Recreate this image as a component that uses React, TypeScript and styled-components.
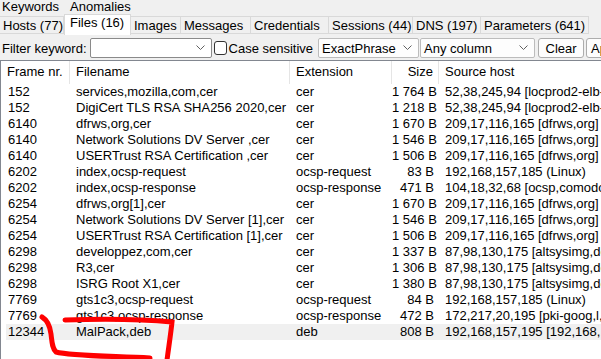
import React from 'react';
import styled, { createGlobalStyle } from 'styled-components';

const GlobalStyle = createGlobalStyle`
  html, body {
    margin: 0;
    padding: 0;
    background: #f0f0f0;
    overflow: hidden;
  }
  body {
    font-family: "Liberation Sans", Arial, sans-serif;
    font-size: 13px;
    color: #000;
  }
`;

interface FileRow {
  frame: string;
  name: string;
  ext: string;
  size: string;
  host: string;
}

const rows: FileRow[] = [
  { frame: '152', name: 'services,mozilla,com,cer', ext: 'cer', size: '1 764 B', host: '52,38,245,94 [locprod2-elb-us-west-2.prod.mozaws.net]' },
  { frame: '152', name: 'DigiCert TLS RSA SHA256 2020,cer', ext: 'cer', size: '1 218 B', host: '52,38,245,94 [locprod2-elb-us-west-2.prod.mozaws.net]' },
  { frame: '6140', name: 'dfrws,org,cer', ext: 'cer', size: '1 670 B', host: '209,17,116,165 [dfrws,org] (Linux)' },
  { frame: '6140', name: 'Network Solutions DV Server ,cer', ext: 'cer', size: '1 546 B', host: '209,17,116,165 [dfrws,org] (Linux)' },
  { frame: '6140', name: 'USERTrust RSA Certification ,cer', ext: 'cer', size: '1 506 B', host: '209,17,116,165 [dfrws,org] (Linux)' },
  { frame: '6202', name: 'index,ocsp-request', ext: 'ocsp-request', size: '83 B', host: '192,168,157,185 (Linux)' },
  { frame: '6202', name: 'index,ocsp-response', ext: 'ocsp-response', size: '471 B', host: '104,18,32,68 [ocsp,comodoca,com]' },
  { frame: '6254', name: 'dfrws,org[1],cer', ext: 'cer', size: '1 670 B', host: '209,17,116,165 [dfrws,org] (Linux)' },
  { frame: '6254', name: 'Network Solutions DV Server [1],cer', ext: 'cer', size: '1 546 B', host: '209,17,116,165 [dfrws,org] (Linux)' },
  { frame: '6254', name: 'USERTrust RSA Certification [1],cer', ext: 'cer', size: '1 506 B', host: '209,17,116,165 [dfrws,org] (Linux)' },
  { frame: '6298', name: 'developpez,com,cer', ext: 'cer', size: '1 337 B', host: '87,98,130,175 [altsysimg,developpez,com]' },
  { frame: '6298', name: 'R3,cer', ext: 'cer', size: '1 306 B', host: '87,98,130,175 [altsysimg,developpez,com]' },
  { frame: '6298', name: 'ISRG Root X1,cer', ext: 'cer', size: '1 380 B', host: '87,98,130,175 [altsysimg,developpez,com]' },
  { frame: '7769', name: 'gts1c3,ocsp-request', ext: 'ocsp-request', size: '84 B', host: '192,168,157,185 (Linux)' },
  { frame: '7769', name: 'gts1c3,ocsp-response', ext: 'ocsp-response', size: '472 B', host: '172,217,20,195 [pki-goog,l,google,com]' },
  { frame: '12344', name: 'MalPack,deb', ext: 'deb', size: '808 B', host: '192,168,157,195 [192,168,157,195] (Linux)' },
];

const upperTabs = ['Keywords', 'Anomalies'];
const lowerTabs: { label: string; width: number }[] = [
  { label: 'Hosts (77)', width: 64 },
  { label: 'Files (16)', width: 67 },
  { label: 'Images', width: 50 },
  { label: 'Messages', width: 70 },
  { label: 'Credentials', width: 78 },
  { label: 'Sessions (44)', width: 84 },
  { label: 'DNS (197)', width: 68 },
  { label: 'Parameters (641)', width: 108 },
];

const Page = styled.div`
  position: relative;
  width: 601px;
  height: 359px;
  overflow: hidden;
  display: flex;
  flex-direction: column;
`;

const TabStrip = styled.div<{ $height: number }>`
  flex: none;
  display: flex;
  align-items: flex-end;
  height: ${(p) => p.$height}px;
  white-space: nowrap;
`;

const UpperTab = styled.div`
  height: 14px;
  line-height: 13px;
  padding: 0 6px 0 2px;
  margin-right: 3px;
`;

const Tab = styled.div<{ $active?: boolean; $width: number }>`
  flex: none;
  width: ${(p) => p.$width}px;
  height: ${(p) => (p.$active ? 21 : 18)}px;
  line-height: ${(p) => (p.$active ? 16 : 18)}px;
  padding-left: ${(p) => (p.$active ? 5 : 3)}px;
  box-sizing: border-box;
  background: ${(p) => (p.$active ? '#ffffff' : '#f0f0f0')};
  border: 1px solid #d9d9d9;
  border-bottom: ${(p) => (p.$active ? 'none' : '1px solid #d9d9d9')};
  border-left: ${(p) => (p.$active ? '1px solid #d9d9d9' : 'none')};
  margin-bottom: ${(p) => (p.$active ? -1 : 0)}px;
  position: relative;
  z-index: ${(p) => (p.$active ? 1 : 0)};
`;

const FilterBar = styled.div`
  flex: none;
  display: flex;
  align-items: center;
  height: 26px;
  padding: 2px 0 0 2px;
  white-space: nowrap;
  box-sizing: border-box;
`;

const Label = styled.span`
  margin-right: 3px;
`;

const Combo = styled.div<{ $width: number; $white?: boolean }>`
  flex: none;
  width: ${(p) => p.$width}px;
  height: 20px;
  box-sizing: border-box;
  border: 1px solid ${(p) => (p.$white ? '#8a8a8a' : '#bcbcbc')};
  border-radius: 2px;
  background: ${(p) => (p.$white ? '#ffffff' : '#fdfdfd')};
  display: flex;
  align-items: center;
  justify-content: space-between;
  padding: 0 6px 0 3px;
  margin-right: 1px;
`;

const Chevron = () => (
  <svg width="9" height="6" viewBox="0 0 9 6">
    <path d="M0.5 0.5 L4.5 4.5 L8.5 0.5" fill="none" stroke="#606060" strokeWidth="1" />
  </svg>
);

const CheckBox = styled.span`
  flex: none;
  width: 11px;
  height: 12px;
  border: 1px solid #333;
  border-radius: 3px;
  background: #fff;
  margin: 0 2px 0 1px;
`;

const CheckLabel = styled.span`
  margin-right: 5px;
`;

const Button = styled.div<{ $width: number }>`
  flex: none;
  width: ${(p) => p.$width}px;
  height: 20px;
  box-sizing: border-box;
  border: 1px solid #adadad;
  border-radius: 3px;
  background: #fdfdfd;
  display: flex;
  align-items: center;
  justify-content: center;
  margin-left: 2px;
`;

const LeftButton = styled(Button)`
  justify-content: flex-start;
  padding-left: 4px;
`;

const Grid = styled.div`
  flex: 1;
  background: #ffffff;
  border-top: 1px solid #828790;
  border-left: 1px solid #828790;
  overflow: hidden;
`;

const HeaderRow = styled.div`
  display: grid;
  grid-template-columns: 69px 220px 102px 47px 400px;
  height: 23px;
  width: 900px;
`;

const HeaderCell = styled.div<{ $right?: boolean }>`
  line-height: 22px;
  padding: 0 ${(p) => (p.$right ? 5 : 6)}px 0 6px;
  border-right: 1px solid #e5e5e5;
  text-align: ${(p) => (p.$right ? 'right' : 'left')};
  white-space: nowrap;
`;

const Row = styled.div<{ $selected?: boolean }>`
  display: grid;
  grid-template-columns: 64px 220px 102px 47px 400px;
  margin-left: 5px;
  height: 16px;
  width: 895px;
  background: ${(p) => (p.$selected ? '#f0f0f0' : 'transparent')};
`;

const Cell = styled.div<{ $right?: boolean; $pad?: number }>`
  line-height: 16px;
  padding: 0 ${(p) => (p.$right ? 5 : 6)}px 0 ${(p) => p.$pad ?? 6}px;
  text-align: ${(p) => (p.$right ? 'right' : 'left')};
  white-space: nowrap;
  overflow: hidden;
`;

const Scribble = styled.svg`
  position: absolute;
  left: 0;
  top: 300px;
  pointer-events: none;
`;

export default function App() {
  return (
    <>
      <GlobalStyle />
      <Page>
        <TabStrip $height={14}>
          {upperTabs.map((t) => (
            <UpperTab key={t}>{t}</UpperTab>
          ))}
        </TabStrip>
        <TabStrip $height={20}>
          {lowerTabs.map((t) => (
            <Tab key={t.label} $width={t.width} $active={t.label === 'Files (16)'}>
              {t.label}
            </Tab>
          ))}
        </TabStrip>
        <FilterBar>
          <Label>Filter keyword:</Label>
          <Combo $width={122} $white>
            <span />
            <Chevron />
          </Combo>
          <CheckBox />
          <CheckLabel>Case sensitive</CheckLabel>
          <Combo $width={101}>
            <span>ExactPhrase</span>
            <Chevron />
          </Combo>
          <Combo $width={115}>
            <span>Any column</span>
            <Chevron />
          </Combo>
          <Button $width={46}>Clear</Button>
          <LeftButton $width={40}>Apply</LeftButton>
        </FilterBar>
        <Grid>
          <HeaderRow>
            <HeaderCell>Frame nr.</HeaderCell>
            <HeaderCell>Filename</HeaderCell>
            <HeaderCell>Extension</HeaderCell>
            <HeaderCell $right>Size</HeaderCell>
            <HeaderCell>Source host</HeaderCell>
          </HeaderRow>
          {rows.map((r, i) => (
            <Row key={i} $selected={i === rows.length - 1}>
              <Cell $pad={2}>{r.frame}</Cell>
              <Cell>{r.name}</Cell>
              <Cell>{r.ext}</Cell>
              <Cell $right $pad={0}>{r.size}</Cell>
              <Cell>{r.host}</Cell>
            </Row>
          ))}
        </Grid>
        <Scribble width="200" height="59" viewBox="0 300 200 59">
          <path
            d="M42 317 C47 320 50 326 51 334 C52 342 52 348 56 352 C70 356 110 356 150 358"
            fill="none"
            stroke="#ff0000"
            strokeWidth="5"
            strokeLinecap="round"
          />
          <path
            d="M65 320 C95 319 140 319 172 322 C171 332 169 345 167 360"
            fill="none"
            stroke="#ff0000"
            strokeWidth="5"
            strokeLinecap="round"
          />
        </Scribble>
      </Page>
    </>
  );
}
